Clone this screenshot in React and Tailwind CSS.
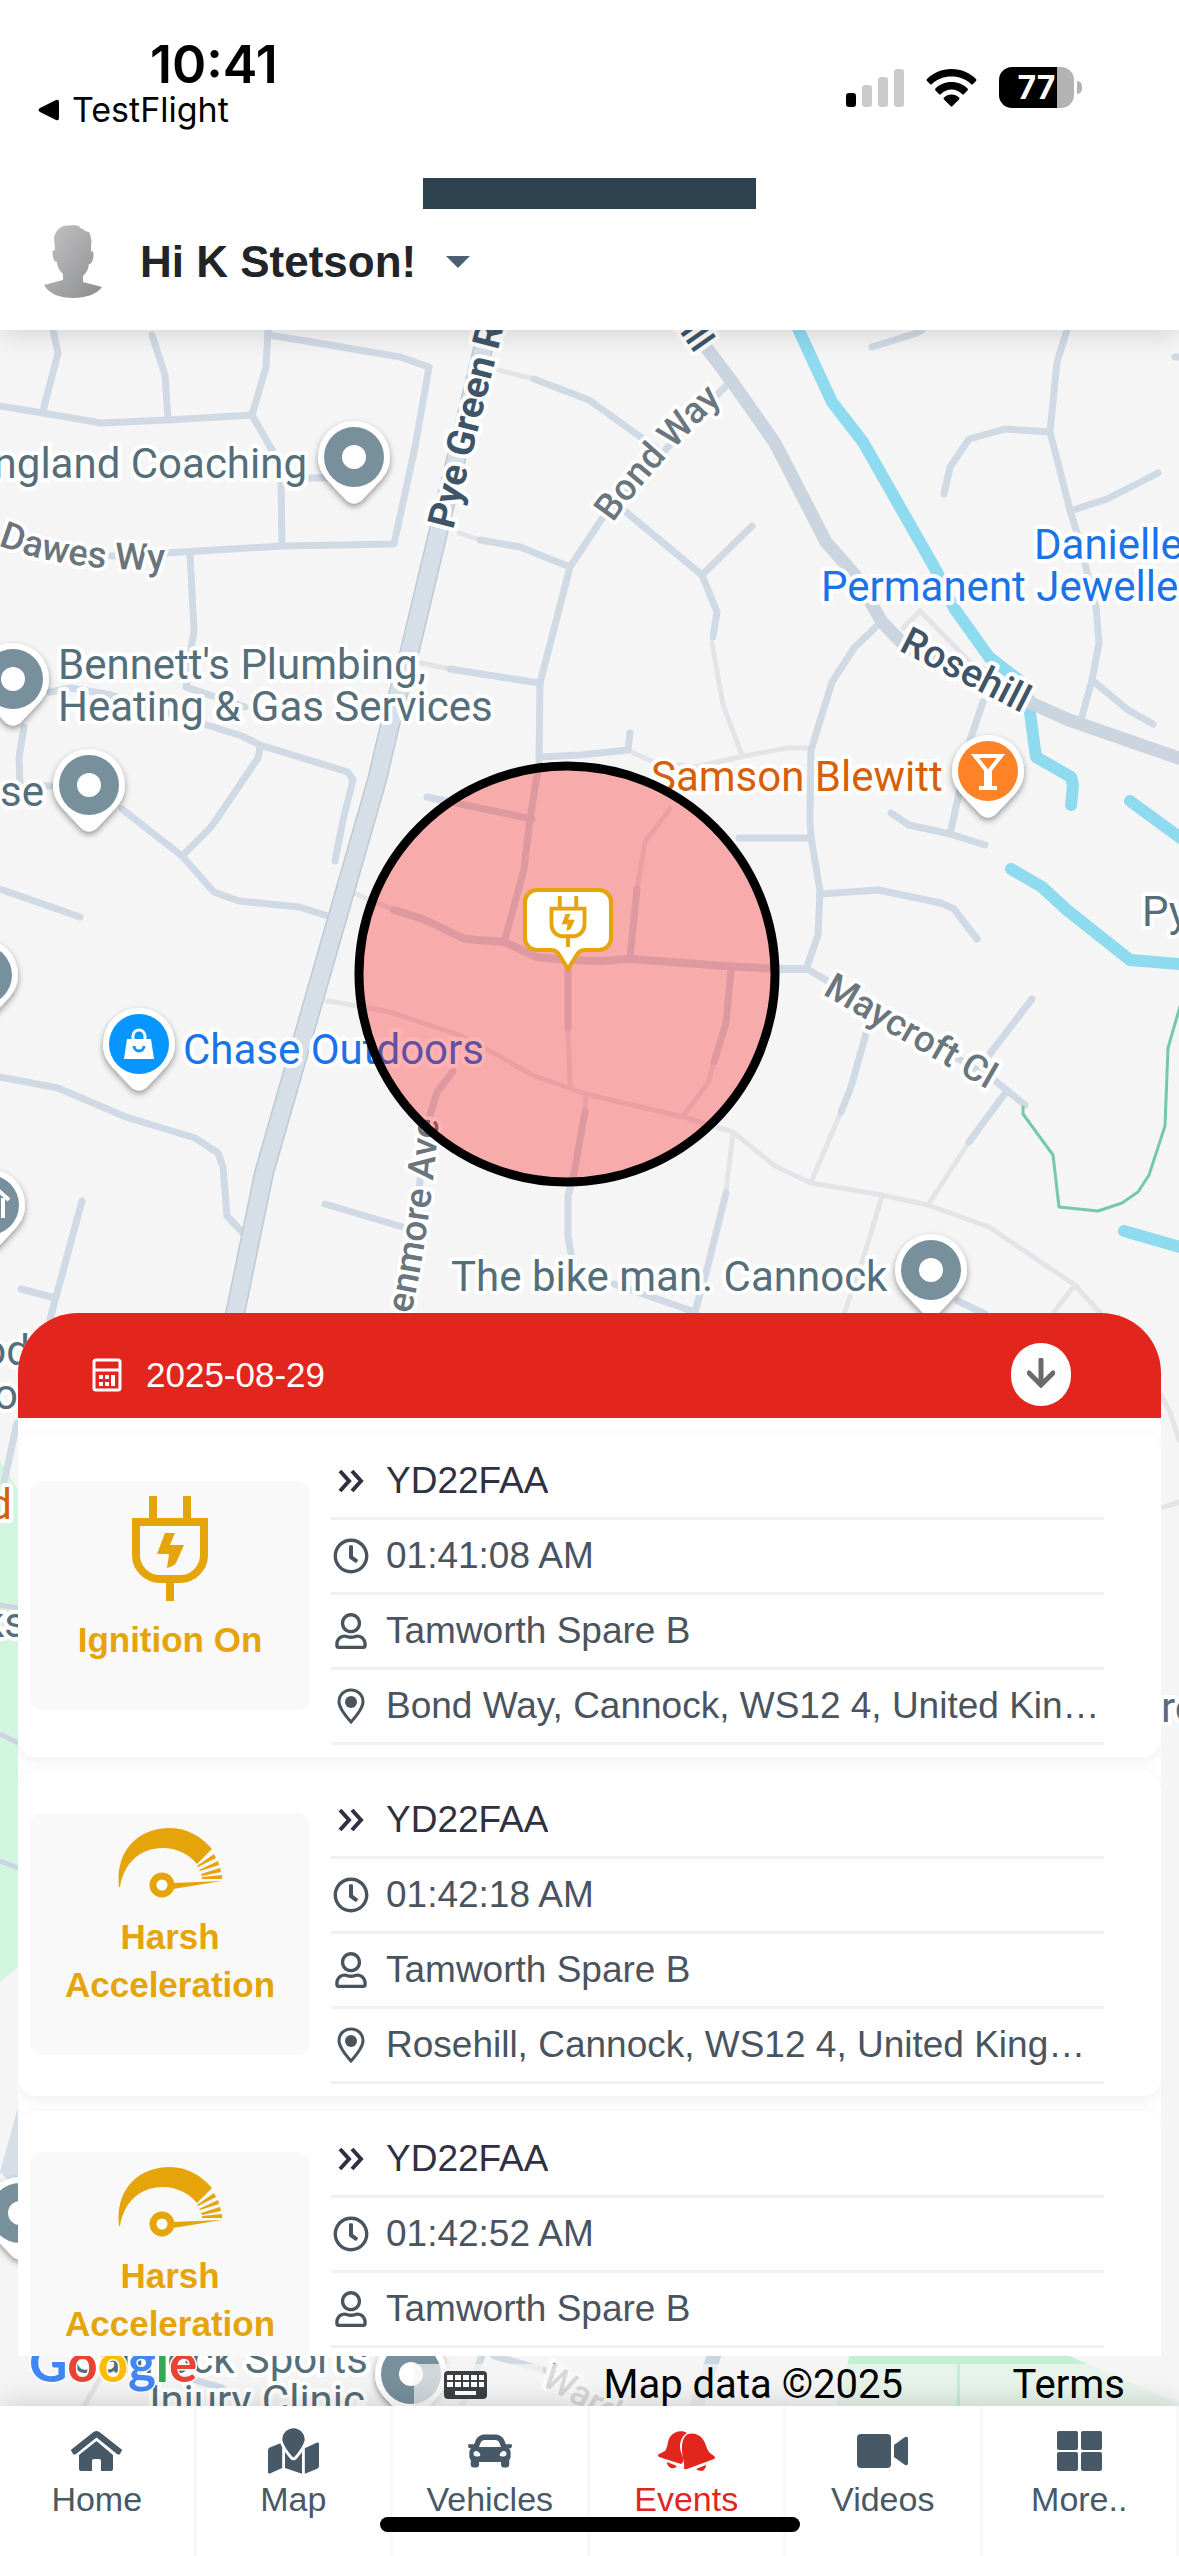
import React from "react";
import { FaCar, FaMapMarked, FaRegClock, FaRegUser } from "react-icons/fa";

const SANS = "font-['Liberation_Sans',Arial,sans-serif]";

/* ---------- map data ---------- */

const STREETS = [
  "53,330 58,353 43,411",
  "0,406 43,413 101,423 168,420 252,415",
  "152,335 165,375 168,419",
  "268,330 266,367 252,415 272,450 281,480 282,545",
  "268,335 306,341 400,357 429,367 415,447 394,544 282,546 166,553 111,556",
  "190,553 194,630 191,650 186,687 245,707",
  "50,692 71,688 111,695 207,725 242,736 260,745 348,772 353,780 343,820 335,861",
  "260,747 258,758 216,820 210,828 182,856",
  "122,809 182,856 214,892 239,901 299,907 331,917",
  "24,727 19,757 20,785 50,786",
  "300,478 330,478",
  "534,379 589,400 656,448",
  "480,540 520,547 570,567",
  "727,385 700,412 601,520 570,567 540,683 539,763 530,819 524,869 505,939",
  "450,669 539,683",
  "540,757 580,755 628,750 630,733",
  "713,637 717,612 702,575 626,512",
  "702,575 752,526",
  "427,797 532,819",
  "872,347 914,334 922,330",
  "1067,330 1057,362 1050,432 1070,510 1077,533 1096,607 1099,643 1092,680 1081,720",
  "1050,432 1005,429 969,439 950,467 944,494",
  "1070,511 1107,499 1158,473",
  "1092,680 1128,710 1153,724",
  "1175,357 1190,357",
  "880,623 854,648 832,682 811,750 810,820 811,837 820,891 818,935 807,967",
  "739,838 811,838",
  "820,894 878,890 941,903 954,909 977,939",
  "983,702 970,740 958,798 950,834",
  "891,813 909,825 950,834 985,845",
  "807,969 826,980 994,1080 1025,1105",
  "1032,999 989,1055",
  "1006,1092 969,1142",
  "867,1030 851,1087 841,1112",
  "726,1193 706,1273 695,1312",
  "614,1284 695,1312",
  "958,1301 985,1314",
  "637,889 630,957",
  "731,969 726,1023 714,1062",
  "568,960 568,1028",
  "585,1112 574,1173 568,1196 568,1237 572,1259",
  "453,1071 448,1078 437,1092 425,1132 419,1191",
  "325,1204 406,1228",
  "0,889 80,917",
  "0,1077 58,1088 126,1117 195,1138 218,1153 223,1167 227,1216 245,1235",
  "82,1201 50,1319",
  "21,1289 55,1298",
  "17,1423 4,1482",
  "482,2356 462,2406",
  "494,2356 551,2372",
  "195,2380 222,2388",
];

const LANES = [
  "498,370 534,379",
  "459,533 480,540",
  "421,663 450,669",
  "631,752 654,762 695,767 740,757 786,748 809,748",
  "742,755 723,705 712,643",
  "903,628 920,611 970,662 985,669",
  "969,1142 928,1205",
  "841,1112 811,1182",
  "327,1001 358,1006 390,1012 459,1035 490,1051 532,1075 586,1094 683,1117 733,1132 775,1166 811,1183 882,1195 928,1205 989,1227 1075,1285 1101,1314",
  "1075,1285 1054,1312",
  "882,1196 861,1266 844,1314",
  "733,1133 726,1191",
  "356,894 394,910",
  "670,809 645,842 637,889",
  "714,1062 708,1083 683,1116",
  "568,1028 570,1085",
  "586,1096 585,1112",
  "1161,1395 1170,1412 1179,1440",
  "1161,1508 1179,1502",
  "104,2372 84,2406",
];

const RIVERS = [
  "794,320 832,402 863,442 937,572 954,608 989,657 1019,680 1027,690 1030,713 1036,757 1071,777 1073,785 1071,805",
  "1130,801 1190,845",
  "1011,869 1042,887 1067,910 1130,960 1190,965",
  "1124,1231 1190,1250",
];

const PYE_GREEN = "490,320 438,533 410,650 390,725 377,780 264,1173 235,1314 226,1350";

/* ---------- map pieces ---------- */

function Pin({ x, y, color = "#78909c", children }) {
  return (
    <g transform={`translate(${x} ${y})`}>
      <path
        d="M-36 0a36 36 0 1 1 72 0c0 11-5 19-12 26L8 43a11 11 0 0 1-16 0L-24 26c-7-7-12-15-12-26z"
        fill="#fff"
        filter="url(#pinShadow)"
      />
      <circle r="30" fill={color} />
      {children || <circle r="12" fill="#fff" />}
    </g>
  );
}

function Label({ x, y, color = "#546e7a", anchor = "start", rotate = 0, weight = 400, size = 42, children }) {
  return (
    <text
      transform={`translate(${x} ${y}) rotate(${rotate})`}
      fill={color}
      fontSize={size}
      fontWeight={weight}
      textAnchor={anchor}
      stroke="#fff"
      strokeWidth="8"
      strokeLinejoin="round"
      paintOrder="stroke"
    >
      {children}
    </text>
  );
}

function CurvedLabel({ path, color = "#6b757d", children }) {
  return (
    <text
      fill={color}
      fontSize="37"
      fontWeight="500"
      stroke="#fff"
      strokeWidth="7"
      strokeLinejoin="round"
      paintOrder="stroke"
    >
      <textPath href={path}>{children}</textPath>
    </text>
  );
}

function Plug({ className, x, y, width, height }) {
  return (
    <svg viewBox="0 0 76 105" className={className} x={x} y={y} width={width} height={height} aria-hidden="true">
      <g fill="#e5a50a">
        <path d="M17 0h8v24h-8zM51 0h8v24h-8zM34 86h8v19h-8z" />
        <path d="M33 37h10l-5 12h14l-8 18q-2 3-9 5l2-14H25z" />
      </g>
      <path d="M4 26h68v33a24 24 0 0 1-24 24H28A24 24 0 0 1 4 59z" fill="none" stroke="#e5a50a" strokeWidth="8" />
    </svg>
  );
}

function MapCanvas() {
  return (
    <svg
      viewBox="0 330 1179 2076"
      preserveAspectRatio="xMidYMid slice"
      className="absolute inset-0 h-full w-full font-[Roboto,sans-serif]"
      role="img"
      aria-label="Map"
    >
      <defs>
        <filter id="pinShadow" x="-30%" y="-30%" width="160%" height="160%">
          <feDropShadow dx="0" dy="3" stdDeviation="3" floodColor="#000" floodOpacity="0.4" />
        </filter>
        <path id="dawes" d="M-2 545 Q70 574 180 569" />
        <path id="bond" d="M613 523 Q650 470 724 398" />
        <path id="kenmore" d="M411 1314 Q432 1222 440 1100" />
      </defs>
      <rect x="0" y="330" width="1179" height="2076" fill="#f5f5f5" />
      <path d="M0 1460L18 1490V1967L0 1982z" fill="#d2f5e0" />
      <path d="M851 2350h204l124 53v3H836z" fill="#c3f0d2" />
      <g fill="none" stroke="#cdd3e0" strokeWidth="5">
        <path d="M0 1605L18 1608M0 1734L18 1743M0 1861L18 1868" />
      </g>
      <path d="M18 2107V2190L0 2172z" fill="#d6dee7" />

      <g fill="none" strokeLinejoin="round" strokeLinecap="round">
        {LANES.map((p) => (
          <polyline key={p} points={p} stroke="#e2e4e8" strokeWidth="5" />
        ))}
        {STREETS.map((p) => (
          <polyline key={p} points={p} stroke="#cfdae5" strokeWidth="7" />
        ))}
        <polyline
          points="394,910 423,919 465,939 505,942 536,957 568,960 600,961 630,959 725,966 779,969 807,969"
          stroke="#cfdae5"
          strokeWidth="8"
        />
        <polyline points="716,2350 695,2410" stroke="#cbd5e1" strokeWidth="14" />
        {RIVERS.map((p) => (
          <polyline key={p} points={p} stroke="#8edaee" strokeWidth="12" />
        ))}
        <polyline
          points="690,326 733,383 775,443 826,542 855,575 882,622 905,646 960,672 1031,703 1069,720 1190,762"
          stroke="#cbd5df"
          strokeWidth="13"
        />
        <polyline points={PYE_GREEN} stroke="#bccad3" strokeWidth="20" />
        <polyline points={PYE_GREEN} stroke="#d6dfe8" strokeWidth="17" />
        <polyline
          points="1023,1107 1023,1114 1053,1155 1059,1207 1098,1211 1122,1203 1138,1192 1149,1175 1165,1126 1168,1048 1181,1003"
          stroke="#75c8aa"
          strokeWidth="3"
        />
      </g>

      <Label x={453} y={530} rotate={-76} color="#3f5567" weight={700} size={38}>Pye Green Rd</Label>
      <Label x={695} y={354} rotate={55} color="#3f5567" weight={500} size={36} anchor="end">Rosehill</Label>
      <Label x={898} y={650} rotate={27} color="#3f5567" weight={500} size={39}>Rosehill</Label>
      <Label x={822} y={994} rotate={30} color="#6b757d" weight={500} size={37}>Maycroft Cl</Label>
      <Label x={540} y={2384} rotate={30} color="#8d9499" weight={500} size={36}>Ward St</Label>
      <CurvedLabel path="#dawes">Dawes Wy</CurvedLabel>
      <CurvedLabel path="#bond">Bond Way</CurvedLabel>
      <CurvedLabel path="#kenmore">enmore Ave</CurvedLabel>

      <Label x={307} y={478} anchor="end">ngland Coaching</Label>
      <Label x={58} y={679}>Bennett&apos;s Plumbing,</Label>
      <Label x={58} y={721}>Heating &amp; Gas Services</Label>
      <Label x={44} y={806} anchor="end">se</Label>
      <Label x={651} y={791} color="#d75f07">Samson Blewitt</Label>
      <Label x={1034} y={559} color="#1a73e8">Danielle</Label>
      <Label x={821} y={601} color="#1a73e8">Permanent Jewelle</Label>
      <Label x={183} y={1064} color="#1a73e8">Chase Outdoors</Label>
      <Label x={451} y={1291}>The bike man. Cannock</Label>
      <Label x={1142} y={926}>Py</Label>
      <Label x={30} y={1365} anchor="end">od</Label>
      <Label x={18} y={1409} anchor="end">o</Label>
      <Label x={12} y={1519} anchor="end" color="#d75f07">d</Label>
      <Label x={26} y={1637} anchor="end">ks</Label>
      <Label x={1161} y={1722}>re</Label>
      <Label x={368} y={2373} anchor="end">Cannock Sports</Label>
      <Label x={365} y={2415} anchor="end">Injury Clinic</Label>

      <Pin x={354} y={457} />
      <Pin x={13} y={679} />
      <Pin x={89} y={785} />
      <Pin x={-18} y={975} />
      <Pin x={-11} y={1205}>
        <path d="M-6-4L10-14 20-5M14-7V13M8 13V0H0V13" fill="none" stroke="#fff" strokeWidth="4" />
      </Pin>
      <Pin x={931} y={1270} />
      <Pin x={20} y={2213} />
      <Pin x={411} y={2374} />
      <Pin x={988} y={771} color="#ff8226">
        <g fill="none" stroke="#fff" strokeWidth="4">
          <path d="M-13-15h26L2-1v17h-4V-1zM-9 17H9" />
        </g>
      </Pin>
      <Pin x={139} y={1044} color="#0795ff">
        <path d="M-12-5h24l3 20h-30z" fill="#fff" />
        <path d="M-6-3v-5a6 6 0 0 1 12 0v5" fill="none" stroke="#fff" strokeWidth="3" />
        <path d="M-5 2a5 5 0 0 0 10 0" fill="none" stroke="#0795ff" strokeWidth="3" />
      </Pin>

      <circle cx="567" cy="974" r="208" fill="#ff0808" fillOpacity="0.31" stroke="#000" strokeWidth="9" />
      <path
        d="M537 890h62a12 12 0 0 1 12 12v36a12 12 0 0 1-12 12h-14c-5 0-7 3-9 6l-8 13-8-13c-2-3-4-6-9-6h-14a12 12 0 0 1-12-12v-36a12 12 0 0 1 12-12z"
        fill="#fff"
        stroke="#e5a50a"
        strokeWidth="4"
      />
      <Plug x="549" y="896" width="38" height="51" />

      <text
        y="2382"
        fontSize="53"
        fontWeight="700"
        stroke="#fff"
        strokeWidth="3"
        paintOrder="stroke"
        className="font-[Lato,sans-serif]"
      >
        <tspan x="29" fill="#4285f4">G</tspan>
        <tspan fill="#ea4335">o</tspan>
        <tspan fill="#fbbc04">o</tspan>
        <tspan fill="#4285f4">g</tspan>
        <tspan fill="#34a853">l</tspan>
        <tspan fill="#ea4335">e</tspan>
      </text>
    </svg>
  );
}

/* ---------- header ---------- */

function StatusBar() {
  return (
    <div className="flex h-[178px] items-start justify-between pl-[38px] pr-[97px] text-black font-[Inter,sans-serif]">
      <div className="pt-10">
        <div className="pl-[112px] text-[52px] font-semibold leading-[50px]">10:41</div>
        <div className="flex items-center gap-3 leading-10">
          <svg viewBox="0 0 22 22" className="h-[22px] w-[22px]" aria-hidden="true">
            <path d="M2 9L18 1q3-1 3 2v16q0 3-3 2L2 13q-3-2 0-4z" />
          </svg>
          <span className="text-[34px]">TestFlight</span>
        </div>
      </div>
      <div className="flex items-center gap-[22px] pt-[67px]">
        <svg viewBox="0 0 58 38" className="h-[38px] w-[58px]" aria-hidden="true">
          <rect x="0" y="24" width="10" height="14" rx="3" />
          <g fill="#cbcbcb">
            <rect x="16" y="16" width="10" height="22" rx="3" />
            <rect x="32" y="8" width="10" height="30" rx="3" />
            <rect x="48" y="0" width="10" height="38" rx="3" />
          </g>
        </svg>
        <svg viewBox="0 0 51 38" className="h-[38px] w-[51px]" aria-hidden="true">
          <path d="M25.500 0C35.500 0 44 4 50 10q1 1 0 2l-3 3q-1 1-2 0C40 10 33 7.500 25.500 7.500S11 10 6 15q-1 1-2 0l-3-3q-1-1 0-2C7 4 15.500 0 25.500 0z" />
          <path d="M25.500 13c6.500 0 12 2.500 16 6.500q1 1 0 2l-3.500 3.500q-1 1-2 0c-3-3-6.500-4.500-10.500-4.500S18 22 15 25q-1 1-2 0l-3.500-3.500q-1-1 0-2c4-4 9.500-6.500 16-6.500z" />
          <path d="M25.500 25.500c3 0 5.500 1 7.500 3q1 1 0 2l-6.500 6.500q-1 1-2 0l-6.500-6.500q-1-1 0-2c2-2 4.500-3 7.500-3z" />
        </svg>
        <div className="flex items-center gap-[3px]">
          <div className="flex h-[41px] w-[75px] items-center justify-center rounded-[13px] bg-linear-to-r from-black from-78% to-[#b3b3b3] to-78% text-[32px] font-bold leading-none text-white">
            77
          </div>
          <div className="h-[13px] w-[5px] rounded-r-full bg-[#b3b3b3]" />
        </div>
      </div>
    </div>
  );
}

function Avatar() {
  return (
    <svg viewBox="0 0 58 73" className="h-[73px] w-[58px]" aria-hidden="true">
      <defs>
        <linearGradient id="avatarFill" x1="0" y1="0" x2="1" y2="1">
          <stop offset="0" stopColor="#c4c4c5" />
          <stop offset="1" stopColor="#8b8c8e" />
        </linearGradient>
      </defs>
      <path
        fill="url(#avatarFill)"
        d="M20 1c4-1 7 0 9-1l6 1 1 2c2 1 4 1 5 3l4 1c2 4 3 9 2 14v5c3 0 3 4 2 8-1 3-2 5-4 5-1 6-3 9-6 12v6l19 5c-5 7-16 11-29 11S5 69 0 60l19-5v-6c-3-3-6-7-6-12-2 0-4-3-4-6-1-3-1-6 2-6l-1-12C11 7 15 2 20 1z"
      />
    </svg>
  );
}

function Header() {
  return (
    <header className="relative z-10 bg-white shadow-[0_4px_26px_rgba(0,0,0,0.14)]">
      <StatusBar />
      <div className="mx-auto h-[31px] w-[333px] bg-[#2c434f]" />
      <div className="flex h-[121px] items-center pb-[16px] pl-[44px]">
        <button type="button" className="flex items-center">
          <Avatar />
          <span className="ml-[38px] text-[44px] font-bold leading-[44px] text-[#212529]">Hi K Stetson!</span>
          <svg viewBox="0 0 24 12" className="ml-[30px] h-3 w-6 fill-[#4d6072]" aria-hidden="true">
            <path d="M0 0h24L12 12z" />
          </svg>
        </button>
      </div>
    </header>
  );
}

/* ---------- events panel ---------- */

function Gauge() {
  return (
    <svg viewBox="0 0 104 70" className="h-[70px] w-[104px]" aria-hidden="true">
      <g fill="#e5a50a">
        <path d="M1 59C-3 25 18 0 52 0c17 0 32 9 42 21L79 36C71 26 58 20 45 20 22 20 6 35 2 59z" />
        <path d="M79 38l17-12 2 4-18 9zM81 42l19-9 1 4-19 6zM83 46l19-6 1 4-19 4zM84 49l20-2v4H84zM54 55l50-2-49 8z" />
      </g>
      <circle cx="44" cy="57" r="9" fill="#fff" stroke="#e5a50a" strokeWidth="7" />
    </svg>
  );
}

function Chevrons() {
  return (
    <svg viewBox="0 0 26 24" className="h-6 w-[26px]" fill="none" stroke="#2f3142" strokeWidth="4" aria-hidden="true">
      <path d="M2 2l9 10-9 10M14 2l9 10-9 10" />
    </svg>
  );
}

function Place() {
  return (
    <svg viewBox="0 0 28 36" className="h-9 w-7" aria-hidden="true">
      <path
        d="M14 2C7 2 2 7 2 14c0 5 4 11 12 20 8-9 12-15 12-20 0-7-5-12-12-12z"
        fill="none"
        stroke="#4a545e"
        strokeWidth="3"
      />
      <circle cx="14" cy="14" r="6" fill="#4a545e" />
    </svg>
  );
}

function Row({ icon, dark, children }) {
  return (
    <li
      className={`flex h-[75px] items-center border-b-3 border-[#f1f1f2] ${dark ? "text-[#2f3142]" : "text-[#4a545e]"}`}
    >
      <span className="ml-[2px] flex w-9 shrink-0 justify-center">{icon}</span>
      <span className="ml-[17px] truncate text-[37px] leading-[48px]">{children}</span>
    </li>
  );
}

const EVENTS = [
  { icon: "plug", title: "Ignition On", time: "01:41:08 AM", place: "Bond Way, Cannock, WS12 4, United Kingdom" },
  { icon: "gauge", title: "Harsh Acceleration", time: "01:42:18 AM", place: "Rosehill, Cannock, WS12 4, United Kingdom" },
  { icon: "gauge", title: "Harsh Acceleration", time: "01:42:52 AM", place: "Rosehill, Cannock, WS12 4, United Kingdom" },
];

function EventCard({ icon, title, time, place }) {
  return (
    <article className="flex shrink-0 items-center gap-[21px] rounded-[18px] bg-white py-3 pl-3 pr-[57px] shadow-[0_3px_14px_rgba(20,30,60,0.07)]">
      <div className="flex w-[280px] shrink-0 flex-col items-center gap-[15px] rounded-xl bg-[#f9f9f9] px-6 pb-[46px] pt-[15px]">
        {icon === "plug" ? <Plug className="h-[105px] w-[76px]" /> : <Gauge />}
        <h2 className="text-center text-[35px] font-bold leading-[48px] text-[#e5a50a]">{title}</h2>
      </div>
      <ul className="min-w-0 flex-1">
        <Row icon={<Chevrons />} dark>YD22FAA</Row>
        <Row icon={<FaRegClock className="h-9 w-9" />}>{time}</Row>
        <Row icon={<FaRegUser className="h-9 w-8" />}>Tamworth Spare B</Row>
        <Row icon={<Place />}>{place}</Row>
      </ul>
    </article>
  );
}

function EventsPanel() {
  return (
    <section className="relative mx-[18px] mb-[50px] flex h-[1043px] flex-col overflow-hidden rounded-t-[60px] bg-white">
      <div className="flex h-[105px] shrink-0 items-center justify-between bg-[#e2261e] pl-[74px] pr-[90px] pt-[18px]">
        <div className="flex items-center gap-[24px] text-white">
          <svg viewBox="0 0 30 34" className="h-[34px] w-[30px]" aria-hidden="true">
            <rect x="2" y="2" width="26" height="30" rx="2" fill="none" stroke="#fff" strokeWidth="3" />
            <path d="M2 12h26" stroke="#fff" strokeWidth="3" />
            <path
              fill="#fff"
              d="M7 17h4v4H7zM13 17h4v4h-4zM19 17h4v11h-4zM7 24h4v4H7zM13 24h4v4h-4z"
            />
          </svg>
          <time className="text-[35px] leading-[34px]">2025-08-29</time>
        </div>
        <button
          type="button"
          aria-label="Collapse list"
          className="flex h-[63px] w-[60px] items-center justify-center rounded-[30px] bg-white"
        >
          <svg viewBox="0 0 28 30" className="-mt-1 h-[30px] w-7" fill="none" aria-hidden="true">
            <path d="M14 2v24M2 15l12 12 12-12" stroke="#6b6b6b" strokeWidth="5" strokeLinecap="round" />
          </svg>
        </button>
      </div>
      <div className="flex min-h-0 flex-1 flex-col gap-[15px] overflow-hidden pt-[15px]">
        {EVENTS.map((e) => (
          <EventCard key={e.time} {...e} />
        ))}
      </div>
    </section>
  );
}

function Attribution() {
  return (
    <div className="absolute bottom-0 right-0 flex h-[42px] gap-[3px] text-[40px] leading-[42px] text-black font-[Roboto,sans-serif]">
      <button type="button" aria-label="Keyboard shortcuts" className="flex w-[129px] items-center bg-[#f5f5f5]/70 pl-[30px]">
        <svg viewBox="0 0 43 28" className="h-7 w-[43px]" aria-hidden="true">
          <rect width="43" height="28" rx="4" fill="#3c4043" />
          <path
            fill="#fff"
            d="M3 4h6v5H3zM11 4h6v5h-6zM19 4h6v5h-6zM27 4h6v5h-6zM35 4h5v5h-5zM3 11h6v5H3zM11 11h6v5h-6zM19 11h6v5h-6zM27 11h6v5h-6zM35 11h5v5h-5zM11 20h21v4H11z"
          />
        </svg>
      </button>
      <span className="flex w-[411px] justify-end bg-[#f5f5f5]/70 pr-[54px]">Map data ©2025</span>
      <a href="#terms" className="flex w-[219px] justify-end bg-[#f5f5f5]/70 pr-[54px]">Terms</a>
    </div>
  );
}

/* ---------- tab bar ---------- */

const TABS = [
  {
    label: "Home",
    icon: (
      <svg viewBox="0 0 51 40" className="h-10 w-[51px] fill-current" aria-hidden="true">
        <path d="M25.500 0q1 0 3 1L50 18q2 1 0 3l-1 2q-1 1-3 0L25.500 6.500 5 23q-2 1-3 0l-1-2q-2-2 0-3L22.500 1q2-1 3-1z" />
        <path d="M25.500 10L42 24v14q0 2-2 2H30V30q0-2-2-2h-5q-2 0-2 2v10H10q-2 0-2-2V24z" />
      </svg>
    ),
  },
  { label: "Map", icon: <FaMapMarked className="h-[46px] w-[51px]" /> },
  { label: "Vehicles", icon: <FaCar className="h-11 w-11" /> },
  {
    label: "Events",
    active: true,
    icon: (
      <svg viewBox="0 0 57 40" className="h-10 w-[57px] fill-current" aria-hidden="true">
        <path d="M29 2C24-1 16 0 12 6c-3 5-2 10-5 14L1 23q-2 1 0 3l22 7c6-4-1-10-1-17 0-6 2-11 7-14z" />
        <path d="M30 3c6-2 13 1 16 7 3 6 3 9 6 12l4 3q2 2 0 3L29 38q-3 1-3-1c1-7-3-14-2-21 0-6 2-11 6-13z" />
        <path d="M9 31l10 4q-2 3-6 2-4-2-4-6zM38 38l10-4q0 4-4 6-4 0-6-2z" />
      </svg>
    ),
  },
  {
    label: "Videos",
    icon: (
      <svg viewBox="0 0 51 34" className="h-[34px] w-[51px] fill-current" aria-hidden="true">
        <rect width="34" height="34" rx="4" />
        <path d="M37 11l11-8q3-1 3 2v24q0 3-3 2l-11-8z" />
      </svg>
    ),
  },
  {
    label: "More..",
    icon: (
      <svg viewBox="0 0 45 40" className="h-10 w-[45px] fill-current" aria-hidden="true">
        <rect width="21" height="19" rx="2" />
        <rect x="24" width="21" height="19" rx="2" />
        <rect y="21" width="21" height="19" rx="2" />
        <rect x="24" y="21" width="21" height="19" rx="2" />
      </svg>
    ),
  },
];

function TabBar() {
  return (
    <nav className="relative z-10 grid h-[150px] shrink-0 grid-cols-6 bg-white shadow-[0_-4px_26px_rgba(0,0,0,0.14)]">
      {TABS.map(({ label, icon, active }) => (
        <a
          key={label}
          href={`#${label}`}
          className={`flex flex-col items-center border-r-3 border-[#f8f8f8] pt-[21px] last:border-r-0 ${active ? "text-[#e2261e]" : "text-[#475867]"}`}
        >
          <span className="flex h-12 items-center">{icon}</span>
          <span className="text-[34px] leading-[48px]">{label}</span>
        </a>
      ))}
      <div className="absolute bottom-6 left-1/2 h-[15px] w-[420px] -translate-x-1/2 rounded-full bg-black" />
    </nav>
  );
}

export default function App() {
  return (
    <div className={`flex h-screen flex-col overflow-hidden bg-white ${SANS}`}>
      <Header />
      <main className="relative flex min-h-0 flex-1 flex-col justify-end">
        <MapCanvas />
        <Attribution />
        <EventsPanel />
      </main>
      <TabBar />
    </div>
  );
}
